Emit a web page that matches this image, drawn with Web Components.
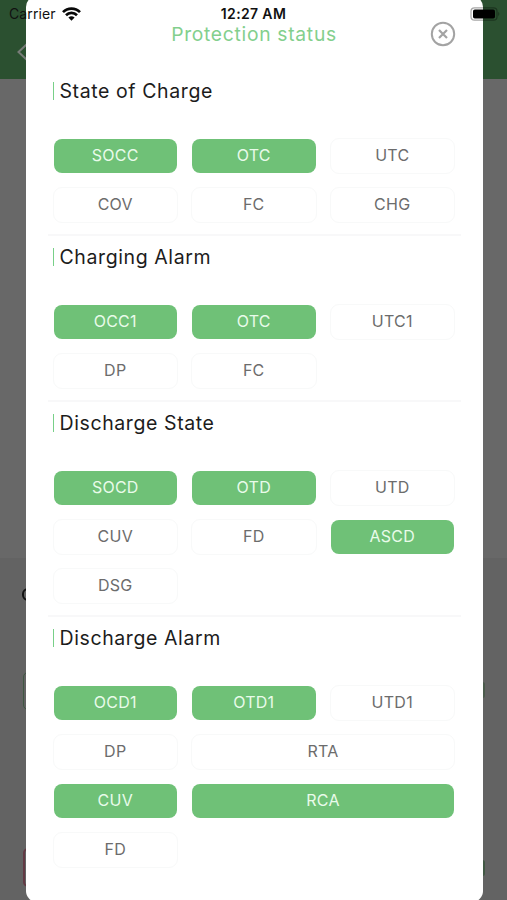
<!DOCTYPE html>
<html lang="en">
<head>
<meta charset="utf-8">
<title>Protection status</title>
<style>
html,body{margin:0;height:100%;overflow:hidden}
body{font-family:Inter,"Liberation Sans",sans-serif;background:#666}
</style>
</head>
<body>
<protection-app></protection-app>
<script>
const define = (name, html, setup) => customElements.define(name, class extends HTMLElement {
  connectedCallback() {
    if (this.shadowRoot) return;
    const t = document.createElement('template');
    t.innerHTML = html;
    this.attachShadow({mode: 'open'}).append(t.content.cloneNode(true));
    if (setup) setup(this);
  }
});

define('status-chip', `<style>
:host{display:flex;align-items:center;justify-content:center;box-sizing:border-box;height:36px;border:1px solid #f8f9f9;border-radius:9px;color:#6c6c6c;font-size:16px;letter-spacing:.25px;line-height:20px;background:#fff;padding-bottom:1px}
:host([on]){background:#6fc177;background-clip:padding-box;border-color:transparent;color:#e9fbea}
:host([wide]){grid-column:span 2}
</style><slot></slot>`);

define('status-section', `<style>
:host{display:block;padding:10px 6px 11px 5px;border-bottom:2px solid #f8f8f9}
:host([last]){border-bottom:0}
header{display:flex;align-items:center;height:22px;margin-bottom:36px;font-size:19.5px;color:#1c1c1c;letter-spacing:.6px;white-space:nowrap}
header::before{content:"";width:1px;height:18px;background:#78d088;margin-right:6px}
.grid{display:grid;grid-template-columns:repeat(3,125.5px);column-gap:13px;row-gap:13px}
</style><header><slot name="title"></slot></header><div class="grid"><slot></slot></div>`);

define('close-button', `<style>:host{display:block;width:26px;height:26px}svg{display:block}</style>
<svg width="26" height="26" viewBox="0 0 26 26" fill="none" stroke="#a3a3a3"><circle cx="13" cy="13" r="11.2" stroke-width="2"/><path d="M9 9l8 8M17 9l-8 8" stroke-width="2.2"/></svg>`);

define('phone-status', `<style>
:host{position:absolute;inset:0 0 auto 0;height:27px;display:grid;grid-template-columns:1fr auto 1fr;align-items:center;font-size:14px;color:#111;line-height:18px;white-space:nowrap}
.l{display:flex;align-items:center;gap:6px;padding-left:9px;letter-spacing:.1px}
.t{font-weight:600;font-size:14px;letter-spacing:.35px}
.b{justify-self:end;margin-right:6px}
svg{display:block}
</style>
<div class="l"><span>Carrier</span><svg width="19" height="14" viewBox="0 0 19 14" fill="none" stroke="#080808" stroke-width="2.7"><path d="M1 5.1a12 12 0 0 1 17 0M4 8.2a7.8 7.8 0 0 1 11 0"/><path d="M9.5 13.8L6.4 10.6a4.5 4.5 0 0 1 6.2 0z" fill="#080808" stroke="none"/></svg></div>
<div class="t">12:27 AM</div>
<svg class="b" width="31" height="14" viewBox="0 0 31 14"><rect x="1" y=".8" width="26" height="12.4" rx="3.5" fill="none" stroke="#000" stroke-opacity=".35" stroke-width="1.2"/><rect x="3" y="2.4" width="22" height="9.2" rx="1.8" fill="#000"/><path d="M28.3 4.8q2 2.2 0 4.4z" fill="#000" fill-opacity=".4"/></svg>`);

define('dimmed-page', `<style>
:host{display:block;height:900px;background:linear-gradient(#686868 0 558px,#636363 558px)}
.nav{height:79px;background:#2b5030;display:flex;align-items:center}
.nav svg{margin:24px 0 0 16px}
.edge{position:absolute;box-sizing:border-box}
</style>
<div class="nav"><svg width="16" height="20" viewBox="0 0 16 20" fill="none" stroke="#787c78" stroke-width="2"><path d="M11 2L2.5 10l8.5 8"/></svg></div>
<div class="edge" style="left:22px;top:588px;width:12px;height:13px;border:2.5px solid #111;border-radius:7px"></div>
<div class="edge" style="left:23px;top:672px;width:30px;height:38px;border:1px solid #3f5742;border-radius:5px"></div>
<div class="edge" style="left:480px;top:682px;width:5px;height:16px;border-radius:3px;background:#4b5b4c"></div>
<div class="edge" style="left:23px;top:848px;width:30px;height:39px;border:2px solid #633944;border-radius:5px"></div>
<div class="edge" style="left:480px;top:860px;width:5px;height:16px;border-radius:3px;background:#415844"></div>`);

define('modal-sheet', `<style>
:host{position:absolute;left:25.5px;top:-4px;width:457px;height:906px;border-radius:11px;background:#fff;box-sizing:border-box;padding:24px 22px 0;display:flex;flex-direction:column}
.head{display:grid;grid-template-columns:1fr auto 1fr;align-items:center;height:27px;margin-bottom:22.6px}
.name{color:#83cf8d;font-size:19.3px;letter-spacing:.7px;white-space:nowrap}
close-button{justify-self:end;margin:1px 4.5px 0 0}
</style>
<div class="head"><span></span><div class="name"><slot name="heading"></slot></div><close-button></close-button></div><slot></slot>`);

const sections = [
  ['State of Charge', 'SOCC* OTC* UTC COV FC CHG'],
  ['Charging Alarm', 'OCC1* OTC* UTC1 DP FC'],
  ['Discharge State', 'SOCD* OTD* UTD CUV FD ASCD* DSG'],
  ['Discharge Alarm', 'OCD1* OTD1* UTD1 DP RTA+ CUV* RCA*+ FD']
];
define('protection-app', `<style>:host{display:block;position:relative;width:507px;height:900px;overflow:hidden}</style>
<dimmed-page></dimmed-page>
<modal-sheet><span slot="heading">Protection status</span>${sections.map(([title, chips], i) =>
  `<status-section${i === 3 ? ' last' : ''}><span slot="title">${title}</span>${chips.split(' ').map(c =>
    `<status-chip${c.includes('*') ? ' on' : ''}${c.includes('+') ? ' wide' : ''}>${c.replace(/[*+]/g, '')}</status-chip>`).join('')}</status-section>`).join('')}</modal-sheet>
<phone-status></phone-status>`);
</script>
</body>
</html>
